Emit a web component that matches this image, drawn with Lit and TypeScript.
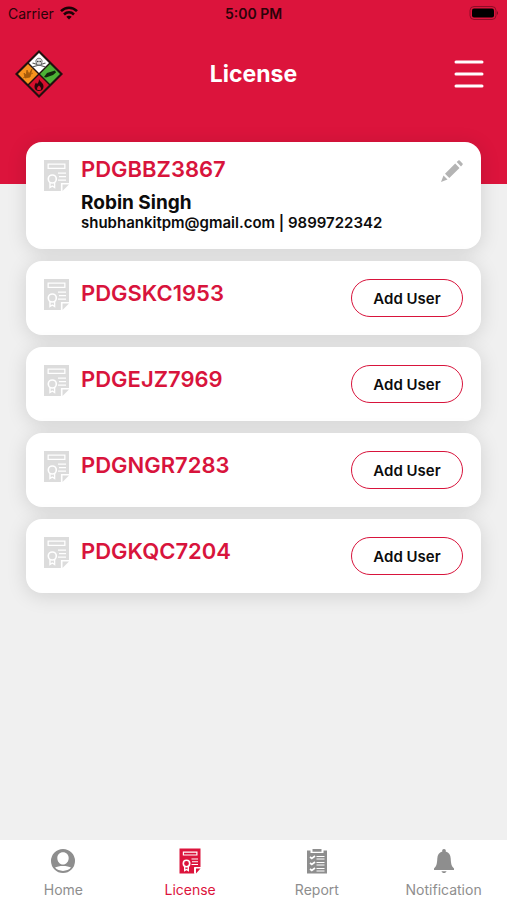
import { LitElement, html, css, svg, nothing } from "lit";
import { customElement, property, state } from "lit/decorators.js";
import { classMap } from "lit/directives/class-map.js";

interface License {
  code: string;
  name?: string;
  contact?: string;
}

const LICENSES: License[] = [
  { code: "PDGBBZ3867", name: "Robin Singh", contact: "shubhankitpm@gmail.com | 9899722342" },
  { code: "PDGSKC1953" },
  { code: "PDGEJZ7969" },
  { code: "PDGNGR7283" },
  { code: "PDGKQC7204" },
];

const certificate = html`<svg class="cert" viewBox="0 0 25 31" aria-hidden="true">
  <path fill="currentColor" fill-rule="evenodd" d="M0 0H25V23H17V31H0Z
    M3.500 3.500V9H21.500V3.500Z M4.800 4.800H20.200V7.700H4.800Z
    M14 12.500V13.700H22V12.500Z M15 16V17.200H22V16Z M14 19.500V20.700H22V19.500Z"/>
  <path fill="currentColor" d="M18.500 24.500H25L18.500 31Z"/>
  <circle cx="8.300" cy="19" r="4" fill="none" stroke="#fff" stroke-width="1.600"/>
  <path d="M6 22.500V27.500L8.300 26L10.600 27.500V22.500" fill="none" stroke="#fff" stroke-width="1.400"/>
  <path d="M17.500 31V23.500H25" fill="none" stroke="#fff" stroke-width="1.200"/>
</svg>`;

const TABS = [
  {
    label: "Home",
    icon: svg`<path fill="currentColor" fill-rule="evenodd" d="M13 1A12 12 0 1 0 13 25A12 12 0 1 0 13 1Z
      M13 4.300C9.600 4.300 7.300 6.800 7.300 10C7.300 13.500 9.800 16.600 13 16.600S18.700 13.500 18.700 10C18.700 6.800 16.400 4.300 13 4.300Z
      M5 19.600C8 17.300 18 17.300 21 19.600C17.500 24 8.500 24 5 19.600Z"/>`,
  },
  {
    label: "License",
    icon: svg`<path fill="currentColor" fill-rule="evenodd" d="M2.500 .5H23.500V19H17.500V25.500H2.500Z
        M5.800 3.500V7.600H20.500V3.500Z M7 4.700H19.300V6.400H7Z
        M14.500 10.500H21V11.500H14.500Z M15 13.200H21V14.200H15Z M14.500 16H21V17H14.500Z"/>
      <path fill="currentColor" d="M19 20.500H23.500L19 25.500Z"/>
      <circle cx="9.500" cy="15.500" r="3.200" fill="none" stroke="#fff" stroke-width="1.600"/>
      <path fill="none" stroke="#fff" stroke-width="1.400" d="M7.700 18.500V22.500L9.500 21.500L11.300 22.500V18.500"/>
      <path d="M17.500 25.500V19.500H23.500" fill="none" stroke="#fff"/>`,
  },
  {
    label: "Report",
    icon: svg`<path fill="currentColor" d="M3 2.500H6.500V5H19.500V2.500H23V25.500H3Z M8.500 1H17.500V3.800H8.500Z"/>
      <path d="M12.500 8.500H20.500M12.500 11H20.500M12.500 14.500H20.500M12.500 17H20.500M12.500 20.500H20.500M12.500 23H20.500" stroke="#fff" stroke-width="1"/>
      <path d="M6 9L7.800 10.500L11 8M6 15L7.800 16.500L11 14M6 21L7.800 22.500L11 20" fill="none" stroke="#fff" stroke-width="1.700"/>`,
  },
  {
    label: "Notification",
    icon: svg`<path fill="currentColor" d="M13 1A2 2 0 0 0 11.300 3.500C8 4.500 6.500 7 6.300 10.500C6 16 5.500 18 3 20.500V22H23V20.500C20.500 18 20 16 19.700 10.500C19.500 7 18 4.500 14.700 3.500A2 2 0 0 0 13 1Z M10.500 23.200H15.500C15 25.600 11 25.600 10.500 23.200Z"/>`,
  },
];

@customElement("status-bar")
class StatusBar extends LitElement {
  static styles = css`
    :host {
      display: grid;
      grid-template-columns: 1fr auto 1fr;
      align-items: center;
      height: 26px;
      padding: 0 8px;
      color: #2b0309;
      font-size: 14px;
    }
    .carrier {
      display: flex;
      align-items: center;
      gap: 6px;
    }
    .wifi {
      width: 18px;
      height: 14px;
    }
    .time {
      font-weight: 600;
    }
    .battery {
      justify-self: end;
      width: 30px;
      height: 14px;
    }
  `;
  render() {
    return html`
      <span class="carrier">Carrier
        <svg class="wifi" viewBox="0 0 18 14" fill="none" stroke="#1c0206" stroke-width="2.600" aria-hidden="true">
          <path d="M1 5.200C5.500 .6 12.500 .6 17 5.200M4 8.500C7 5.700 11 5.700 14 8.500"/>
          <path d="M9 13.500L6.300 10.700Q9 8.700 11.700 10.700Z" fill="#1c0206" stroke="none"/>
        </svg>
      </span>
      <span class="time">5:00 PM</span>
      <svg class="battery" viewBox="0 0 30 14" aria-hidden="true">
        <rect x="1" y=".5" width="26" height="13" rx="4" fill="none" stroke="#8f0c27"/>
        <rect x="3" y="2.500" width="22" height="9" rx="2" fill="#000"/>
        <path d="M28 5Q30 7 28 9Z" fill="#7a0a20"/>
      </svg>
    `;
  }
}

@customElement("license-card")
class LicenseCard extends LitElement {
  @property({ attribute: false }) license!: License;

  static styles = css`
    .card {
      display: flex;
      align-items: flex-start;
      gap: 12px;
      box-sizing: border-box;
      min-height: 74px;
      padding: 18px;
      border-radius: 16px;
      background: #fff;
      box-shadow: 0 3px 20px rgba(0, 0, 0, 0.13);
    }
    .cert {
      flex: none;
      width: 25px;
      height: 31px;
      color: #dcdcdc;
    }
    .body {
      flex: 1;
      min-width: 0;
    }
    h2,
    p {
      margin: 0;
    }
    .code {
      color: #d8143c;
      font-size: 22px;
      font-weight: 600;
      line-height: 28px;
    }
    .assigned .body {
      margin-top: -5px;
    }
    .name {
      margin-top: 8px;
      color: #0c0c0c;
      font-size: 19px;
      font-weight: 700;
      line-height: 24px;
    }
    .contact {
      color: #0c0c0c;
      font-size: 15px;
      font-weight: 600;
      line-height: 16px;
    }
    button {
      font: inherit;
      cursor: pointer;
    }
    .add {
      box-sizing: border-box;
      width: 112px;
      height: 38px;
      padding: 0;
      border: 1px solid #d8143c;
      border-radius: 19px;
      background: #fff;
      color: #0c0c0c;
      font-size: 15px;
      font-weight: 600;
    }
    .edit {
      padding: 0;
      border: 0;
      background: none;
      color: #b4b4b4;
    }
    .pencil {
      display: block;
      width: 22px;
      height: 22px;
    }
  `;

  render() {
    const { code, name, contact } = this.license;
    return html`
      <article class=${classMap({ card: true, assigned: !!name })}>
        ${certificate}
        <div class="body">
          <h2 class="code">${code}</h2>
          ${name
            ? html`<p class="name">${name}</p><p class="contact">${contact}</p>`
            : nothing}
        </div>
        ${name
          ? html`<button class="edit" aria-label="Edit user">
              <svg class="pencil" viewBox="0 0 22 22" fill="currentColor" aria-hidden="true">
                <path d="M0 22L2.500 15.500L6.500 19.500Z M4 13.800L14.200 3.600L18.500 7.900L8.300 18.100Z M15.700 2.100L17.300 .6Q18 0 18.700 .6L21.500 3.400Q22.200 4.100 21.500 4.800L20 6.400Z"/>
              </svg>
            </button>`
          : html`<button class="add">Add User</button>`}
      </article>
    `;
  }
}

@customElement("app-root")
class AppRoot extends LitElement {
  @state() private active = "License";

  static styles = css`
    :host {
      display: flex;
      flex-direction: column;
      min-height: 100vh;
      background: #f0f0f0;
      font-family: Inter, "Liberation Sans", sans-serif;
    }
    .header {
      padding-bottom: 62px;
      background: #dc143c;
    }
    .bar {
      display: grid;
      grid-template-columns: 1fr auto 1fr;
      align-items: center;
      height: 96px;
      padding: 0 14px;
    }
    .logo {
      width: 50px;
      height: 50px;
    }
    .title {
      margin: 0;
      color: #fff;
      font-size: 23px;
      font-weight: 700;
    }
    .menu {
      justify-self: end;
      padding: 0 8px;
      border: 0;
      background: none;
      cursor: pointer;
    }
    .lines {
      display: block;
      width: 32px;
      height: 30px;
    }
    .list {
      flex: 1;
      display: flex;
      flex-direction: column;
      gap: 12px;
      margin-top: -42px;
      padding: 0 26px 24px;
    }
    .tabs {
      display: grid;
      grid-template-columns: repeat(4, 1fr);
      height: 60px;
      background: #fff;
    }
    .tab {
      display: flex;
      flex-direction: column;
      align-items: center;
      gap: 8px;
      padding-top: 8px;
      color: #8e8e8e;
      font-size: 14px;
      line-height: 16px;
      text-decoration: none;
    }
    .tab.active {
      color: #dc143c;
    }
    .glyph {
      width: 26px;
      height: 26px;
    }
  `;

  render() {
    return html`
      <header class="header">
        <status-bar></status-bar>
        <div class="bar">
          <svg class="logo" viewBox="0 0 50 50" aria-hidden="true">
            <path d="M25 1L49 25L25 49L1 25Z" fill="#21100f"/>
            <path d="M25 4L35 14L25 24L15 14Z" fill="#fff"/>
            <path d="M14 15L24 25L14 35L4 25Z" fill="#f7931e"/>
            <path d="M36 15L46 25L36 35L26 25Z" fill="#4cb035"/>
            <path d="M25 26L35 36L25 46L15 36Z" fill="#d5102c"/>
            <path d="M18.500 14L31.500 18M31.500 14L18.500 18" stroke="#555" stroke-width="1.200"/>
            <path d="M22 13C21 8 29 8 28 13L27 16H23Z" fill="#ddd" stroke="#555" stroke-width=".8"/>
            <circle cx="23.800" cy="12.500" r=".8" fill="#333"/>
            <circle cx="26.200" cy="12.500" r=".8" fill="#333"/>
            <path d="M9 29L19 24M10 24L12 26L13 21L15 25L18 20L16 28L11 29Z" fill="#a55b0b" stroke="#a55b0b" stroke-width=".8"/>
            <path d="M30 28L33 24L41 21.500L42 23.500L39 26L32 28.500Z" fill="#13230d"/>
            <path d="M25 30C26 33 30 34 29.500 38C29 41 27 42 25 42S20.500 41 20.500 37.500C20.500 35.500 21.500 34.500 22 33.500L23 35C24.500 34 25 32 25 30Z" fill="#26070b"/>
            <path d="M25 36.500Q28 39 26.500 41H23.500Q22 39 25 36.500Z" fill="#d5102c"/>
          </svg>
          <h1 class="title">License</h1>
          <button class="menu" aria-label="Menu">
            <svg class="lines" viewBox="0 0 32 30" stroke="#fff" stroke-width="3" stroke-linecap="round" aria-hidden="true">
              <path d="M3 3H29M3 15H29M3 27H29"/>
            </svg>
          </button>
        </div>
      </header>
      <main class="list">
        ${LICENSES.map((l) => html`<license-card .license=${l}></license-card>`)}
      </main>
      <nav class="tabs">
        ${TABS.map(
          (t) => html`<a
            href="#${t.label.toLowerCase()}"
            class=${classMap({ tab: true, active: t.label === this.active })}
            @click=${() => (this.active = t.label)}
          >
            <svg class="glyph" viewBox="0 0 26 26" aria-hidden="true">${t.icon}</svg>
            <span>${t.label}</span>
          </a>`
        )}
      </nav>
    `;
  }
}
